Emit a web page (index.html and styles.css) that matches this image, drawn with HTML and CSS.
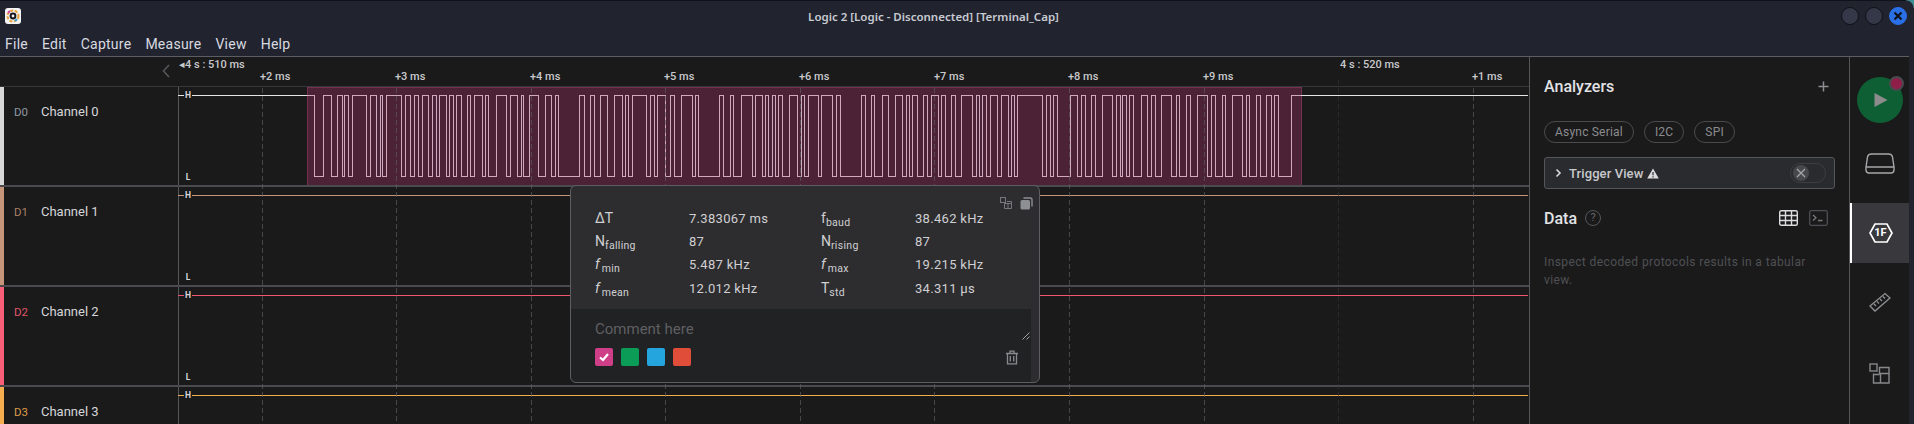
FILE: index.html
```html
<!DOCTYPE html>
<html lang="en">
<head>
    <meta charset="UTF-8">
    <title>Logic 2 [Logic - Disconnected] [Terminal_Cap]</title>
    <link rel="stylesheet" href="styles.css">
</head>
<body>
    <div class="window">
        <header class="titlebar">
            <div class="titlebar-top">
                <svg class="app-logo" width="16" height="16" viewBox="0 0 16 16">
                    <rect width="16" height="16" rx="3" fill="#f4f4f6"/>
                    <circle cx="8" cy="8" r="5.5" fill="none" stroke="#e8a33a" stroke-width="2" stroke-dasharray="3 1.5"/>
                    <path d="M3 5 L5 3" stroke="#d0439a" stroke-width="2"/>
                    <path d="M12 11 L10 13" stroke="#3aa0e0" stroke-width="2"/>
                    <circle cx="8" cy="8" r="3.4" fill="#15151a"/>
                    <circle cx="8" cy="8" r="1.4" fill="#f4f4f6"/>
                </svg>
                <div class="app-title">Logic 2 [Logic - Disconnected] [Terminal_Cap]</div>
                <div class="win-controls">
                    <span class="win-btn"></span>
                    <span class="win-btn"></span>
                    <span class="win-btn win-close">
                        <svg width="10" height="10" viewBox="0 0 10 10"><path d="M1.5 1.5 L8.5 8.5 M8.5 1.5 L1.5 8.5" stroke="#10131c" stroke-width="2.2"/></svg>
                    </span>
                </div>
            </div>
            <nav class="menubar">
                <span>File</span><span>Edit</span><span>Capture</span><span>Measure</span><span>View</span><span>Help</span>
            </nav>
        </header>

        <div class="main">
            <section class="timeline">
                <div class="ruler">
                    <svg class="collapse" width="8" height="14" viewBox="0 0 8 14"><path d="M7 1 L1.5 7 L7 13" fill="none" stroke="#55565a" stroke-width="1.6"/></svg>
                    <span class="time-major time-first">&#9666;4 s : 510 ms</span>
                    <span class="time-major" style="left: 1340px">4 s : 520 ms</span>
                    <span class="time-minor" style="left: 260px">+2 ms</span>
                    <span class="time-minor" style="left: 395px">+3 ms</span>
                    <span class="time-minor" style="left: 530px">+4 ms</span>
                    <span class="time-minor" style="left: 664px">+5 ms</span>
                    <span class="time-minor" style="left: 799px">+6 ms</span>
                    <span class="time-minor" style="left: 934px">+7 ms</span>
                    <span class="time-minor" style="left: 1068px">+8 ms</span>
                    <span class="time-minor" style="left: 1203px">+9 ms</span>
                    <span class="time-minor" style="left: 1472px">+1 ms</span>
                </div>

                <div class="channel">
                    <div class="channel-label ch-0"><span class="ch-id">D0</span><span class="ch-name">Channel 0</span></div>
                    <div class="plot">
                        <svg class="trace" viewBox="179 0 1350 98" width="1350" height="98">
                            <rect class="selection" x="308" y="0" width="994" height="98"/>
                            <path class="trace-d0" d="M179 8.5 H308 M1302 8.5 H1529"/>
                            <path class="wave" d="M308 8.5 H315 V89.5
                                H324 V8.5 H332 V89.5 H338 V8.5 H343 V89.5 H345 V8.5 H349 V89.5 H353 V8.5 H367 V89.5
                                H371 V8.5 H377 V89.5 H381 V8.5 H383 V89.5 H387 V8.5 H402 V89.5 H406 V8.5 H411 V89.5
                                H415 V8.5 H419 V89.5 H423 V8.5 H429 V89.5 H433 V8.5 H437 V89.5 H440 V8.5 H447 V89.5
                                H450 V8.5 H454 V89.5 H457 V8.5 H462 V89.5 H468 V8.5 H471 V89.5 H475 V8.5 H483 V89.5
                                H486 V8.5 H489 V89.5 H497 V8.5 H507 V89.5 H511 V8.5 H518 V89.5 H522 V8.5 H524 V89.5
                                H530 V8.5 H539 V89.5 H546 V8.5 H552 V89.5 H556 V8.5 H559 V89.5 H580 V8.5 H585 V89.5
                                H591 V8.5 H595 V89.5 H601 V8.5 H608 V89.5 H615 V8.5 H623 V89.5 H626 V8.5 H629 V89.5
                                H633 V8.5 H647 V89.5 H651 V8.5 H655 V89.5 H658 V8.5 H666 V89.5 H671 V8.5 H675 V89.5
                                H682 V8.5 H693 V89.5 H696 V8.5 H699 V89.5 H720 V8.5 H724 V89.5 H731 V8.5 H734 V89.5
                                H742 V8.5 H753 V89.5 H756 V8.5 H763 V89.5 H766 V8.5 H769 V89.5 H773 V8.5 H776 V89.5
                                H779 V8.5 H783 V89.5 H790 V8.5 H798 V89.5 H802 V8.5 H805 V89.5 H809 V8.5 H819 V89.5
                                H822 V8.5 H833 V89.5 H837 V8.5 H841 V89.5 H862 V8.5 H866 V89.5 H872 V8.5 H875 V89.5
                                H883 V8.5 H889 V89.5 H896 V8.5 H903 V89.5 H907 V8.5 H910 V89.5 H913 V8.5 H918 V89.5
                                H924 V8.5 H928 V89.5 H932 V8.5 H939 V89.5 H942 V8.5 H946 V89.5 H952 V8.5 H956 V89.5
                                H962 V8.5 H973 V89.5 H977 V8.5 H980 V89.5 H983 V8.5 H987 V89.5 H991 V8.5 H998 V89.5
                                H1002 V8.5 H1009 V89.5 H1012 V8.5 H1015 V89.5 H1018 V8.5 H1043 V89.5 H1047 V8.5 H1051 V89.5
                                H1054 V8.5 H1058 V89.5 H1071 V8.5 H1078 V89.5 H1082 V8.5 H1086 V89.5 H1092 V8.5 H1096 V89.5
                                H1103 V8.5 H1113 V89.5 H1117 V8.5 H1121 V89.5 H1123 V8.5 H1127 V89.5 H1130 V8.5 H1134 V89.5
                                H1142 V8.5 H1148 V89.5 H1152 V8.5 H1156 V89.5 H1162 V8.5 H1172 V89.5 H1177 V8.5 H1180 V89.5
                                H1187 V8.5 H1191 V89.5 H1198 V8.5 H1208 V89.5 H1212 V8.5 H1216 V89.5 H1223 V8.5 H1226 V89.5
                                H1233 V8.5 H1243 V89.5 H1247 V8.5 H1250 V89.5 H1257 V8.5 H1261 V89.5 H1267 V8.5 H1272 V89.5
                                H1275 V8.5 H1279 V89.5 H1292 V8.5 H1302"/>
                        </svg>
                        <span class="level level-h">H</span>
                        <span class="level level-l">L</span>
                    </div>
                </div>

                <div class="channel">
                    <div class="channel-label ch-1"><span class="ch-id">D1</span><span class="ch-name">Channel 1</span></div>
                    <div class="plot">
                        <svg class="trace" viewBox="179 0 1350 98" width="1350" height="98"><path class="trace-d1" d="M179 8.5 H1529"/></svg>
                        <span class="level level-h">H</span>
                        <span class="level level-l">L</span>
                    </div>
                </div>

                <div class="channel">
                    <div class="channel-label ch-2"><span class="ch-id">D2</span><span class="ch-name">Channel 2</span></div>
                    <div class="plot">
                        <svg class="trace" viewBox="179 0 1350 98" width="1350" height="98"><path class="trace-d2" d="M179 8.5 H1529"/></svg>
                        <span class="level level-h">H</span>
                        <span class="level level-l">L</span>
                    </div>
                </div>

                <div class="channel">
                    <div class="channel-label ch-3"><span class="ch-id">D3</span><span class="ch-name">Channel 3</span></div>
                    <div class="plot">
                        <svg class="trace" viewBox="179 0 1350 98" width="1350" height="98"><path class="trace-d3" d="M179 8.5 H1529"/></svg>
                        <span class="level level-h">H</span>
                    </div>
                </div>

                <!-- time grid, page x coordinates -->
                <svg class="grid" viewBox="179 0 1350 338" width="1350" height="338">
                    <path d="M263 0 V338 M397.5 0 V338 M532 0 V338 M666.5 0 V338 M801 0 V338 M935.5 0 V338 M1070 0 V338 M1205.5 0 V338 M1474.5 0 V338"/>
                    <path class="grid-major" d="M1339.5 -8 V338"/>
                </svg>

                <div class="popup">
                    <div class="popup-tools">
                        <svg width="14" height="14" viewBox="0 0 14 14" fill="none" stroke="#77787c" stroke-width="1"><rect x="1.5" y="1.5" width="5" height="5"/><path d="M5.5 7.5 H12.5 V12.5 H5.5 Z M9 7.5 V12.5 M8 5.5 H12.5 V7.5"/></svg>
                        <svg width="13" height="13" viewBox="0 0 13 13"><rect x="0.5" y="3" width="9.5" height="9.5" rx="1.5" fill="#8e8f93"/><path d="M3.5 1 H10.5 Q12 1 12 2.5 V9.5" fill="none" stroke="#8e8f93" stroke-width="1.4"/></svg>
                    </div>
                    <div class="stats">
                        <span class="stat-name">&Delta;T</span><span>7.383067 ms</span>
                        <span class="stat-name">f<sub>baud</sub></span><span>38.462 kHz</span>
                        <span class="stat-name">N<sub>falling</sub></span><span>87</span>
                        <span class="stat-name">N<sub>rising</sub></span><span>87</span>
                        <span class="stat-name"><i>f</i><sub>min</sub></span><span>5.487 kHz</span>
                        <span class="stat-name"><i>f</i><sub>max</sub></span><span>19.215 kHz</span>
                        <span class="stat-name"><i>f</i><sub>mean</sub></span><span>12.012 kHz</span>
                        <span class="stat-name">T<sub>std</sub></span><span>34.311 &mu;s</span>
                    </div>
                    <div class="comment-box">
                        <div class="comment-text">Comment here</div>
                        <svg class="resizer" width="8" height="8" viewBox="0 0 8 8"><path d="M0.5 7.5 L7.5 0.5 M4.5 7.5 L7.5 4.5" stroke="#a5a5a8" stroke-width="1"/></svg>
                        <div class="comment-foot">
                            <span class="swatch swatch-pink">
                                <svg width="12" height="12" viewBox="0 0 12 12"><path d="M2 6.5 L5 9 L10 3" fill="none" stroke="#fff" stroke-width="2.2"/></svg>
                            </span>
                            <span class="swatch swatch-green"></span>
                            <span class="swatch swatch-blue"></span>
                            <span class="swatch swatch-red"></span>
                            <svg class="trash" width="14" height="15" viewBox="0 0 14 15" fill="none" stroke="#8a8b8e" stroke-width="1.3"><path d="M1 3.5 H13 M5 3.5 V1.2 H9 V3.5 M2.5 3.5 V13.8 H11.5 V3.5 M5.3 6 V11.5 M8.7 6 V11.5"/></svg>
                        </div>
                    </div>
                </div>
            </section>

            <aside class="panel">
                <div class="panel-head">
                    <h2>Analyzers</h2>
                    <svg width="11" height="11" viewBox="0 0 11 11"><path d="M5.5 0.5 V10.5 M0.5 5.5 H10.5" stroke="#8d8e91" stroke-width="1.5"/></svg>
                </div>
                <div class="chips">
                    <span class="chip">Async Serial</span>
                    <span class="chip">I2C</span>
                    <span class="chip">SPI</span>
                </div>
                <div class="trigger">
                    <svg width="7" height="10" viewBox="0 0 7 10"><path d="M1.5 1.5 L5 5 L1.5 8.5" fill="none" stroke="#d8d8da" stroke-width="1.6"/></svg>
                    <span class="trigger-name">Trigger View</span>
                    <svg width="12" height="11" viewBox="0 0 12 11"><path d="M6 0.5 L11.8 10.5 H0.2 Z" fill="#dcdcde"/><path d="M6 4 V7.2 M6 8.2 V9.4" stroke="#2a2b2e" stroke-width="1.2"/></svg>
                    <span class="toggle">
                        <span class="toggle-knob">
                            <svg width="10" height="10" viewBox="0 0 10 10"><path d="M1 1 L9 9 M9 1 L1 9" stroke="#a6a6a8" stroke-width="1.3"/></svg>
                        </span>
                    </span>
                </div>
                <div class="data-head">
                    <h2>Data</h2>
                    <span class="help">?</span>
                    <svg class="table-icon" width="19" height="16" viewBox="0 0 19 16" fill="none" stroke="#dcdcde" stroke-width="1.4"><rect x="0.7" y="0.7" width="17.6" height="14.6" rx="1.5"/><path d="M0.7 5.5 H18.3 M0.7 10.5 H18.3 M6.5 0.7 V15.3 M12.5 0.7 V15.3"/></svg>
                    <svg width="19" height="16" viewBox="0 0 19 16" fill="none" stroke="#4e4f52" stroke-width="1.3"><rect x="0.7" y="0.7" width="17.6" height="14.6" rx="1.5"/><path d="M4 5 L7 7.8 L4 10.5 M9 10.5 H13.5" stroke="#77787b"/></svg>
                </div>
                <p class="data-hint">Inspect decoded protocols results in a tabular view.</p>
            </aside>

            <nav class="sidebar">
                <div class="play">
                    <svg width="14" height="16" viewBox="0 0 14 16"><path d="M0.5 1 L13.5 8 L0.5 15 Z" fill="#8c8c8c"/></svg>
                    <span class="play-dot"></span>
                </div>
                <div class="side-item side-device">
                    <svg width="32" height="21" viewBox="0 0 32 21" fill="none" stroke="#a6a7a9" stroke-width="1.4"><path d="M2 14 L3.5 4 Q4 1 7.5 1 H24.5 Q28 1 28.500 4 L30 14 V17 Q30 20 27 20 H5 Q2 20 2 17 Z M2 14 H30"/></svg>
                </div>
                <div class="side-item side-active">
                    <span class="hex">
                        <svg width="24" height="20" viewBox="0 0 24 20"><path d="M6 1 H18 L23 10 L18 19 H6 L1 10 Z" fill="none" stroke="#fff" stroke-width="1.7"/></svg>
                        <span class="hex-label">1F</span>
                    </span>
                </div>
                <div class="side-item side-ruler">
                    <svg width="22" height="20" viewBox="0 0 22 20" fill="none" stroke="#8f9092" stroke-width="1.3"><path d="M1 14 L16 1.500 L21 6 L6 19 Z M5 12 L7 14 M8 9.500 L10 11.500 M11 7 L13 9 M14 4.500 L16 6.500"/></svg>
                </div>
                <div class="side-item side-ext">
                    <svg width="21" height="21" viewBox="0 0 21 21" fill="none" stroke="#87888a" stroke-width="1.4"><rect x="1" y="1" width="7" height="7"/><path d="M4.500 10.500 V20 H20 V4.500 H10.500 V10.500 H20 M11.500 10.500 V20 M4.500 11.500 H10.500"/></svg>
                </div>
            </nav>
        </div>
    </div>
</body>
</html>
```

FILE: styles.css
```css
* {
    margin: 0;
    padding: 0;
    box-sizing: border-box;
}

body {
    position: relative;
    width: 1914px;
    height: 424px;
    overflow: hidden;
    background: #21242f;
    font-family: Roboto, sans-serif;
    color: #e0e0e2;
}

/* desktop showing behind the rounded window corner */
body::after {
    content: "";
    position: absolute;
    right: 0;
    top: 0;
    width: 8px;
    height: 8px;
    background: radial-gradient(circle at 0 100%, transparent 7px, #3f8f95 8px);
}

.window {
    display: flex;
    flex-direction: column;
    width: 1909px;
    height: 424px;
}

/* Title bar and menu */
.titlebar {
    height: 57px;
    flex: none;
    background: #21242f;
    border-top: 1px solid #10121a;
    border-bottom: 1px solid #5d5e63;
}

.titlebar-top {
    position: relative;
    display: flex;
    align-items: center;
    justify-content: center;
    height: 31px;
}

.app-logo {
    position: absolute;
    left: 5px;
    top: 7px;
}

.app-title {
    padding-right: 42px;
    font-family: "Noto Sans", sans-serif;
    font-size: 11.5px;
    font-weight: 600;
    color: #c9cbd2;
}

.win-controls {
    position: absolute;
    right: 2px;
    top: 6px;
    display: flex;
    gap: 6px;
}

.win-btn {
    display: flex;
    align-items: center;
    justify-content: center;
    width: 18px;
    height: 18px;
    border-radius: 50%;
    background: #343848;
    border: 1px solid #0e1016;
}

.win-close {
    background: #2b6fe6;
    border-color: #2b6fe6;
}

.menubar {
    display: flex;
    gap: 14px;
    padding-left: 5px;
    font-size: 14px;
    line-height: 24px;
    letter-spacing: 0.25px;
    color: #d8dae0;
}

/* Main area */
.main {
    display: flex;
    flex: 1;
    min-height: 0;
    background: #1a1a1b;
}

.timeline {
    position: relative;
    width: 1529px;
    flex: none;
    overflow: hidden;
}

.ruler {
    position: relative;
    height: 30px;
    border-bottom: 1px solid #36373a;
}

.collapse {
    position: absolute;
    left: 162px;
    top: 7px;
}

.time-major,
.time-minor {
    position: absolute;
    font-size: 11px;
    font-weight: 500;
    white-space: nowrap;
    color: #c9c9cb;
}

.time-major {
    top: 1px;
}

.time-first {
    left: 179px;
}

.time-minor {
    top: 13px;
}

.channel {
    display: flex;
    height: 100px;
    border-bottom: 2px solid #4a4b4e;
}

.channel-label {
    display: flex;
    gap: 15px;
    width: 179px;
    flex: none;
    padding: 17px 0 0 10px;
    border-left: 4px solid;
    border-right: 1px solid #55565a;
    font-size: 13px;
    line-height: 16px;
}

.ch-id {
    width: 12px;
    font-size: 11.5px;
}

.ch-name {
    color: #d5d6d8;
}

.ch-0 { border-left-color: #d8d8d8; }
.ch-0 .ch-id { color: #8f98a2; }
.ch-1 { border-left-color: #c6957a; }
.ch-1 .ch-id { color: #a87f67; }
.ch-2 { border-left-color: #f85e78; }
.ch-2 .ch-id { color: #e0566a; }
.ch-3 { border-left-color: #f5ae4e; }
.ch-3 .ch-id { color: #dc9c48; }

.plot {
    position: relative;
    flex: 1;
}

.trace {
    display: block;
    margin-left: -1px;
    fill: none;
    shape-rendering: crispEdges;
}

.selection {
    fill: #4b2236;
    stroke: #74304d;
    stroke-width: 1;
}

.wave {
    stroke: #cfa9bd;
    stroke-width: 1;
}

.trace-d0 { stroke: #e4e4e4; }
.trace-d1 { stroke: #c6957a; }
.trace-d2 { stroke: #f0566f; }
.trace-d3 { stroke: #f5ae4e; }

.level {
    position: absolute;
    left: 5px;
    width: 8px;
    height: 11px;
    font-size: 8.5px;
    font-weight: 700;
    line-height: 11px;
    text-align: center;
    color: #d6d6d8;
}

.level-h {
    top: 3px;
    background: #1a1a1b;
}

.level-l {
    top: 85px;
}

.grid {
    position: absolute;
    left: 178px;
    top: 31px;
    fill: none;
    stroke: #5d5d62;
    stroke-width: 1;
    stroke-dasharray: 5 3;
    stroke-opacity: 0.65;
    overflow: visible;
    shape-rendering: crispEdges;
}

.grid-major {
    stroke: #343437;
}

/* Measurement popup */
.popup {
    position: absolute;
    left: 570px;
    top: 128px;
    display: flex;
    flex-direction: column;
    width: 470px;
    height: 198px;
    padding-right: 8px;
    background: #2d2d30;
    border: 1px solid #5d5e61;
    border-radius: 6px;
}

.popup-tools {
    position: absolute;
    right: 6px;
    top: 10px;
    display: flex;
    gap: 7px;
    align-items: center;
}

.stats {
    display: grid;
    grid-template-columns: 94px 132px 94px 1fr;
    grid-template-rows: 23px 23px 24px 23px;
    align-content: start;
    height: 123px;
    padding: 21px 0 0 24px;
    font-size: 13px;
    line-height: 23px;
    letter-spacing: 0.3px;
    color: #d0d0d2;
}

.stat-name {
    font-size: 14px;
    letter-spacing: 0;
}

.stat-name i {
    padding-right: 2px;
}

.stat-name sub {
    font-size: 10.5px;
    line-height: 0;
    vertical-align: -3px;
    letter-spacing: 0.3px;
}

.comment-box {
    position: relative;
    flex: 1;
    padding: 10px 0 0 24px;
    background: #212224;
    border-radius: 0 0 0 6px;
}

.comment-text {
    height: 29px;
    font-size: 15px;
    line-height: 20px;
    color: #5f5f62;
}

.resizer {
    position: absolute;
    right: 1px;
    top: 23px;
}

.comment-foot {
    display: flex;
    gap: 8px;
    align-items: center;
}

.swatch {
    display: flex;
    align-items: center;
    justify-content: center;
    width: 18px;
    height: 18px;
    border-radius: 2px;
}

.swatch-pink { background: #cf3f87; }
.swatch-green { background: #0b9c58; }
.swatch-blue { background: #25a5de; }
.swatch-red { background: #e04e3a; }

.trash {
    margin-left: auto;
    margin-right: 12px;
}

/* Analyzers panel */
.panel {
    width: 321px;
    flex: none;
    padding: 0 14px;
    border-left: 1px solid #55565a;
    border-right: 1px solid #55565a;
}

.panel h2 {
    font-size: 16px;
    font-weight: 500;
    color: #e2e3e6;
}

.panel-head {
    display: flex;
    align-items: center;
    justify-content: space-between;
    height: 58px;
    padding-right: 6px;
}

.chips {
    display: flex;
    gap: 10px;
    margin-top: 6px;
}

.chip {
    height: 22px;
    padding: 0 10px;
    border: 1px solid #4a4b4e;
    border-radius: 11px;
    font-size: 12px;
    line-height: 20px;
    letter-spacing: 0.2px;
    color: #8b8c8f;
}

.trigger {
    display: flex;
    align-items: center;
    height: 32px;
    margin-top: 14px;
    padding: 0 8px 0 10px;
    background: #2a2b2e;
    border: 1px solid #55565a;
    border-radius: 3px;
}

.trigger-name {
    margin: 0 4px 0 7px;
    font-size: 13px;
    font-weight: 500;
    letter-spacing: 0.1px;
    color: #c8c9cc;
}

.toggle {
    display: flex;
    align-items: center;
    width: 36px;
    height: 20px;
    margin-left: auto;
    padding-left: 2px;
    border: 1px solid #3d3e41;
    border-radius: 10px;
}

.toggle-knob {
    display: flex;
    align-items: center;
    justify-content: center;
    width: 16px;
    height: 16px;
    border-radius: 50%;
    background: #47484b;
}

.data-head {
    display: flex;
    align-items: center;
    height: 20px;
    margin-top: 19px;
    padding-right: 7px;
}

.help {
    width: 16px;
    height: 16px;
    margin-left: 8px;
    border: 1px solid #55565a;
    border-radius: 50%;
    font-size: 11px;
    line-height: 14px;
    text-align: center;
    color: #66676a;
}

.table-icon {
    margin-left: auto;
    margin-right: 11px;
}

.data-hint {
    margin-top: 25px;
    width: 290px;
    font-size: 12px;
    line-height: 18px;
    letter-spacing: 0.4px;
    color: #4f5053;
}

/* Right icon strip */
.sidebar {
    display: flex;
    flex-direction: column;
    width: 59px;
    flex: none;
}

.play {
    position: relative;
    display: flex;
    align-items: center;
    justify-content: center;
    width: 46px;
    height: 46px;
    margin: 20px 0 0 7px;
    padding-left: 2px;
    border-radius: 50%;
    background: #0f5f35;
}

.play-dot {
    position: absolute;
    right: -1px;
    top: -1px;
    width: 15px;
    height: 15px;
    border-radius: 50%;
    background: #8f1f49;
    border: 2px solid #4a4a4e;
}

.side-item {
    display: flex;
    align-items: center;
    justify-content: center;
    flex: none;
}

.side-device {
    height: 80px;
}

.side-active {
    height: 60px;
    background: #38383d;
    border-left: 2px solid #fff;
}

.hex {
    position: relative;
    display: flex;
}

.hex-label {
    position: absolute;
    inset: 0;
    font-size: 11px;
    font-weight: 700;
    line-height: 20px;
    text-align: center;
    color: #fff;
}

.side-ruler {
    height: 78px;
}

.side-ext {
    height: 64px;
}
```
